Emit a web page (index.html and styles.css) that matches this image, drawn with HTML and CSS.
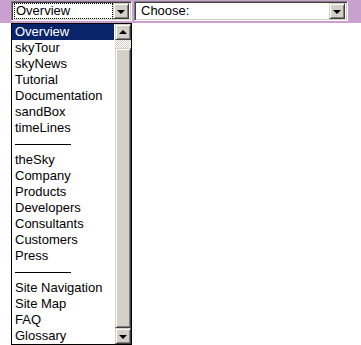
FILE: index.html
```html
<!DOCTYPE html>
<html lang="en">
<head>
    <meta charset="UTF-8">
    <title>Navigation</title>
    <link rel="stylesheet" href="styles.css">
</head>
<body>
    <div class="bar">
        <div class="select sel-main">
            <span class="value focus">Overview</span>
            <span class="btn"><span class="tri down"></span></span>
        </div>
        <div class="select sel-choose">
            <span class="value">Choose:</span>
            <span class="btn"><span class="tri down"></span></span>
        </div>
    </div>

    <!-- open dropdown list -->
    <div class="dropdown">
        <ul class="options">
            <li class="selected">Overview</li>
            <li>skyTour</li>
            <li>skyNews</li>
            <li>Tutorial</li>
            <li>Documentation</li>
            <li>sandBox</li>
            <li>timeLines</li>
            <li class="sep"><span></span></li>
            <li>theSky</li>
            <li>Company</li>
            <li>Products</li>
            <li>Developers</li>
            <li>Consultants</li>
            <li>Customers</li>
            <li>Press</li>
            <li class="sep"><span></span></li>
            <li>Site Navigation</li>
            <li>Site Map</li>
            <li>FAQ</li>
            <li>Glossary</li>
        </ul>
        <div class="scrollbar">
            <span class="sbtn"><span class="tri up"></span></span>
            <span class="track"></span>
            <span class="thumb"></span>
            <span class="sbtn"><span class="tri down"></span></span>
        </div>
    </div>
</body>
</html>
```

FILE: styles.css
```css
* { margin: 0; padding: 0; box-sizing: border-box; }
body { background: #fff; font-family: "Liberation Sans", Arial, sans-serif; font-size: 13px; color: #000; width: 361px; height: 345px; overflow: hidden; position: relative; }

.bar { background: #c9a0cf; height: 23px; padding: 1px 13px 2px 11px; display: flex; gap: 2px; }
.select { height: 20px; background: #fff; display: flex; align-items: center; justify-content: space-between; border: 1px solid; border-color: #808080 #fff #fff #808080; box-shadow: inset 1px 1px 0 #404040, inset -1px -1px 0 #d4d0c8; padding: 2px; }
.sel-main { width: 121px; }
.sel-choose { width: 214px; }
.value { line-height: 14px; padding: 0 1px; margin-left: 1px; }
.sel-choose .value { margin-left: 3px; }
.focus { outline: 1px dotted #000; width: 97px; height: 14px; }
.btn { width: 16px; height: 16px; background: #d4d0c8; border: 1px solid; border-color: #d4d0c8 #404040 #404040 #d4d0c8; box-shadow: inset 1px 1px 0 #fff, inset -1px -1px 0 #808080; display: flex; align-items: center; justify-content: center; }
.tri { width: 0; height: 0; border-left: 4px solid transparent; border-right: 4px solid transparent; }
.tri.down { border-top: 4px solid #000; margin-top: 1px; }
.tri.up { border-bottom: 4px solid #000; margin-bottom: 1px; }

.dropdown { position: absolute; left: 11px; top: 23px; width: 121px; height: 322px; background: #fff; border: 1px solid #000; display: flex; }
.options { list-style: none; flex: 1; }
.options li { height: 16px; line-height: 16px; padding-left: 3px; white-space: nowrap; }
.options li.selected { background: #0a246a; color: #fff; margin-right: 1px; }
.options li.sep { display: flex; align-items: center; }
.options li.sep span { width: 56px; border-top: 1px solid #000; }

.scrollbar { width: 16px; display: flex; flex-direction: column; }
.sbtn { height: 16px; flex: none; background: #d4d0c8; border: 1px solid; border-color: #d4d0c8 #404040 #404040 #d4d0c8; box-shadow: inset 1px 1px 0 #fff, inset -1px -1px 0 #808080; display: flex; align-items: center; justify-content: center; }
.track { height: 8px; flex: none; background: repeating-conic-gradient(#d4d0c8 0 25%, #fff 0 50%) 0 0 / 2px 2px; }
.thumb { flex: 1; background: #d4d0c8; border: 1px solid; border-color: #d4d0c8 #404040 #404040 #d4d0c8; box-shadow: inset 1px 1px 0 #fff, inset -1px -1px 0 #808080; }
```
